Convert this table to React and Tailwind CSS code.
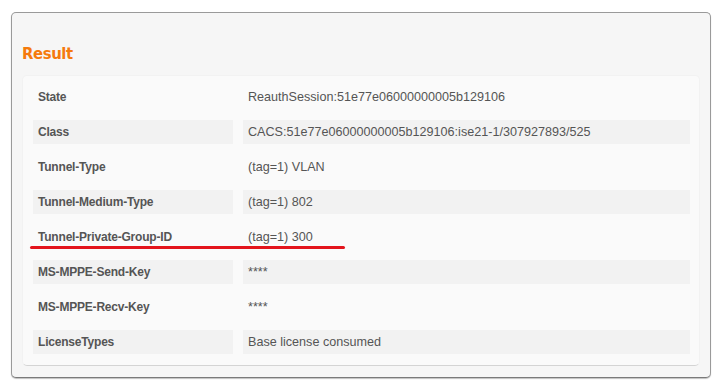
import React from "react";

const rows = [
  ["State", "ReauthSession:51e77e06000000005b129106"],
  ["Class", "CACS:51e77e06000000005b129106:ise21-1/307927893/525"],
  ["Tunnel-Type", "(tag=1) VLAN"],
  ["Tunnel-Medium-Type", "(tag=1) 802"],
  ["Tunnel-Private-Group-ID", "(tag=1) 300"],
  ["MS-MPPE-Send-Key", "****"],
  ["MS-MPPE-Recv-Key", "****"],
  ["LicenseTypes", "Base license consumed"],
];

export default function App() {
  return (
    <div className="w-[720px] h-[385px] bg-white pt-[12px] pl-[11px] font-['Liberation_Sans',Arial,sans-serif]">
      <div className="relative w-[700px] h-[366px] rounded-[5px] border border-[#9a9a9a] border-b-[#7a7a7a] bg-[#f6f6f6] shadow-[0_1px_1px_rgba(0,0,0,0.25)] px-[10px]">
        <h2 className="pt-[31px] h-[62px] text-[16.5px] leading-[20px] font-bold text-[#f57a0c] font-['DejaVu_Sans_Condensed','Liberation_Sans',sans-serif] tracking-[-0.4px]">
          Result
        </h2>
        <div className="rounded-[5px] border border-[#f2f2f2] border-b-[#d4d4d4] bg-[#fafafa] pt-[9px] pb-[11px] pl-[10px] pr-[9px] flex flex-col gap-[11px]">
          {rows.map(([k, v], i) => (
            <div key={k} className="flex gap-[10px] h-[24px] text-[#555]">
              <div
                className={
                  "w-[200px] flex items-center pl-[5px] font-bold text-[12px] tracking-[-0.2px] " +
                  (i % 2 === 1 ? "bg-[#f2f2f2]" : "")
                }
              >
                {k}
              </div>
              <div
                className={
                  "flex-1 flex items-center pl-[5px] text-[12.6px] " +
                  (i % 2 === 1 ? "bg-[#f2f2f2]" : "")
                }
              >
                {v}
              </div>
            </div>
          ))}
        </div>
        {/* red marker under the group ID row */}
        <div className="absolute left-[18px] top-[233px] w-[315px] h-[3px] rounded-full bg-[#e3141c]" />
      </div>
    </div>
  );
}
